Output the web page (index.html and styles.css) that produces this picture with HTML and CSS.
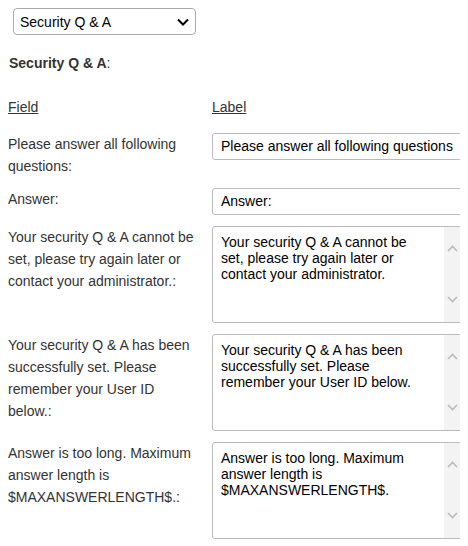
FILE: index.html
```html
<!DOCTYPE html>
<html>
<head>
<meta charset="utf-8">
<link rel="stylesheet" href="styles.css">
</head>
<body>
<div class="picker">
  <span class="picker-text">Security Q &amp; A</span>
  <svg class="picker-chev" width="12" height="8" viewBox="0 0 12 8"><path d="M1 1.5 L6 6.5 L11 1.5" fill="none" stroke="#000" stroke-width="2"/></svg>
</div>
<div class="title"><b>Security Q &amp; A</b>:</div>
<div class="grid">
  <div class="head">Field</div>
  <div class="head">Label</div>

  <div class="lbl">Please answer all following questions:</div>
  <div class="fld"><div class="input">Please answer all following questions</div></div>

  <div class="lbl">Answer:</div>
  <div class="fld"><div class="input">Answer:</div></div>

  <div class="lbl">Your security Q &amp; A cannot be set, please try again later or contact your administrator.:</div>
  <div class="fld"><div class="area"><div class="area-text">Your security Q &amp; A cannot be set, please try again later or contact your administrator.</div><div class="sb"><svg width="11" height="7" viewBox="0 0 11 7"><path d="M1 6 L5.5 1.5 L10 6" fill="none" stroke="#bbb" stroke-width="1.6"/></svg><svg width="11" height="7" viewBox="0 0 11 7"><path d="M1 1 L5.5 5.5 L10 1" fill="none" stroke="#bbb" stroke-width="1.6"/></svg></div></div></div>

  <div class="lbl">Your security Q &amp; A has been successfully set. Please remember your User ID below.:</div>
  <div class="fld"><div class="area"><div class="area-text">Your security Q &amp; A has been successfully set. Please remember your User ID below.</div><div class="sb"><svg width="11" height="7" viewBox="0 0 11 7"><path d="M1 6 L5.5 1.5 L10 6" fill="none" stroke="#bbb" stroke-width="1.6"/></svg><svg width="11" height="7" viewBox="0 0 11 7"><path d="M1 1 L5.5 5.5 L10 1" fill="none" stroke="#bbb" stroke-width="1.6"/></svg></div></div></div>

  <div class="lbl">Answer is too long. Maximum answer length is $MAXANSWERLENGTH$.:</div>
  <div class="fld"><div class="area"><div class="area-text">Answer is too long. Maximum answer length is $MAXANSWERLENGTH$.</div><div class="sb"><svg width="11" height="7" viewBox="0 0 11 7"><path d="M1 6 L5.5 1.5 L10 6" fill="none" stroke="#bbb" stroke-width="1.6"/></svg><svg width="11" height="7" viewBox="0 0 11 7"><path d="M1 1 L5.5 5.5 L10 1" fill="none" stroke="#bbb" stroke-width="1.6"/></svg></div></div></div>
</div>
</body>
</html>
```

FILE: styles.css
```css
body {
  margin: 8px;
  font-family: "Liberation Sans", Arial, sans-serif;
  font-size: 14px;
  color: #333;
  background: #fff;
}
.picker {
  margin-left: 5px;
  height: 25px;
  border: 1px solid #aaa;
  border-radius: 4px;
  display: flex;
  align-items: center;
  justify-content: space-between;
  padding: 0 6px 0 6px;
  box-sizing: content-box;
  width: 169px;
  color: #000;
}
.picker-text { font-size: 14px; }
.title {
  margin-top: 17px;
  margin-left: 1px;
  line-height: 22px;
}
.grid {
  margin-top: 22px;
  display: grid;
  grid-template-columns: 204px 250px;
  row-gap: 11px;
  align-items: start;
}
.head {
  text-decoration: underline;
  line-height: 22px;
  margin-bottom: 4px;
}
.lbl {
  line-height: 22px;
  padding-right: 14px;
}
.input {
  height: 25px;
  border: 1px solid #bbb;
  border-radius: 3px;
  padding: 0 8px;
  line-height: 25px;
  color: #000;
  white-space: nowrap;
  overflow: hidden;
}
.area {
  height: 95px;
  border: 1px solid #bbb;
  border-radius: 3px;
  display: flex;
  color: #000;
  overflow: hidden;
}
.area-text {
  flex: 1;
  padding: 7px 18px 6px 8px;
  line-height: 16px;
}
.sb {
  width: 17px;
  background: #f3f3f3;
  display: flex;
  flex-direction: column;
  justify-content: space-between;
  align-items: center;
  padding: 18px 0 19px;
}
.sb svg { display: block; }
```
